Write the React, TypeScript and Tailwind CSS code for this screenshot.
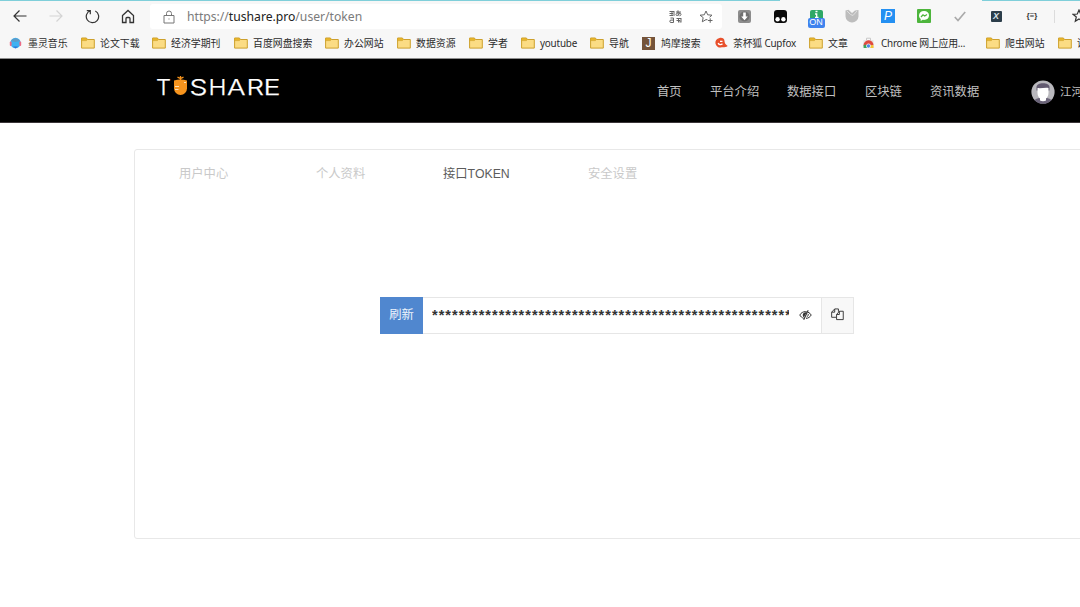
import React from "react";

const cjk = "font-['Liberation_Sans','Noto_Sans_CJK_SC',sans-serif]";

function Folder() {
  return (
    <svg width="14" height="12" viewBox="0 0 14 12">
      <path d="M.6 1.2h4.8l1.2 1.3h6.7v8.6H.6z" fill="#fbdc84" stroke="#cda02c" strokeWidth="1" />
      <path d="M.6 1h4.8l1 1.4-1 1.2H.6z" fill="#e9b62b" stroke="#cda02c" strokeWidth=".6" />
    </svg>
  );
}

function Headphones() {
  return (
    <svg width="13" height="12" viewBox="0 0 13 12">
      <circle cx="6.5" cy="6" r="5.2" fill="#3fb2f2" />
      <path d="M2 4a5 5 0 0 1 9 0L6.500 5z" fill="#5d9cc8" />
      <rect x=".8" y="4.500" width="1.800" height="4.500" rx=".9" fill="#ed6b86" />
      <rect x="10.400" y="4.500" width="1.800" height="4.500" rx=".9" fill="#ed6b86" />
      <path d="M4 9.500h5l-2.500 2z" fill="#2f72d8" />
    </svg>
  );
}

function Fox() {
  return (
    <svg width="14" height="12" viewBox="0 0 14 12">
      <path d="M5.500 1C8 .3 10.300 1.500 10.500 4c.2 2 .8 3.500 3.200 5-2 1.600-4.500 1.300-6 1.300A4.800 4.800 0 1 1 5.500 1z" fill="#e8502c" />
      <path d="M4.200 6c.5 1.800 2.800 2.200 4.300.8M6 4.300h2.500" stroke="#fff" strokeWidth="1.300" fill="none" />
    </svg>
  );
}

function WebStore() {
  return (
    <svg width="13" height="12" viewBox="0 0 13 12">
      <path d="M1.500 3h10l.7 8H.8z" fill="#e6e6e6" />
      <path d="M4.500 3V1.200h4V3" stroke="#c9c9c9" fill="none" />
      <path d="M1.500 8.500A5 5 0 0 1 11.500 8L8.500 9H4z" fill="#e04a3f" />
      <path d="M1.500 8.200 1.700 11H6L4 7.500z" fill="#3ba55c" />
      <path d="M11.500 8.200V11H6.500L8.500 8z" fill="#f6c433" />
      <circle cx="6.500" cy="9" r="2.100" fill="#4a86e8" stroke="#fff" strokeWidth=".7" />
    </svg>
  );
}

function JBadge() {
  return (
    <span className="flex h-[13px] w-[13px] items-center justify-center bg-[#75543a] font-['Liberation_Sans',sans-serif] text-[12px] leading-none text-white">J</span>
  );
}

const bookmarks: { label: string; width: string; icon: React.ReactNode; tight?: boolean }[] = [
  { label: "墨灵音乐", width: "w-[72px]", icon: <Headphones /> },
  { label: "论文下载", width: "w-[71px]", icon: <Folder /> },
  { label: "经济学期刊", width: "w-[82px]", icon: <Folder /> },
  { label: "百度网盘搜索", width: "w-[91px]", icon: <Folder /> },
  { label: "办公网站", width: "w-[72px]", icon: <Folder /> },
  { label: "数据资源", width: "w-[72px]", icon: <Folder /> },
  { label: "学者", width: "w-[52px]", icon: <Folder /> },
  { label: "youtube", width: "w-[69px]", icon: <Folder />, tight: true },
  { label: "导航", width: "w-[52px]", icon: <Folder /> },
  { label: "鸠摩搜索", width: "w-[72px]", icon: <JBadge /> },
  { label: "茶杯狐 Cupfox", width: "w-[95px]", icon: <Fox />, tight: true },
  { label: "文章", width: "w-[53px]", icon: <Folder /> },
  { label: "Chrome 网上应用...", width: "w-[124px]", icon: <WebStore />, tight: true },
  { label: "爬虫网站", width: "w-[72px]", icon: <Folder /> },
  { label: "讲座", width: "w-[72px]", icon: <Folder /> },
];

function Cell({ children }: { children: React.ReactNode }) {
  return <div className="flex h-full w-9 shrink-0 items-center justify-center">{children}</div>;
}

function Toolbar() {
  return (
    <div className="flex h-[30px] shrink-0 items-center pl-[2px]">
      <Cell>
        <svg width="14" height="12" viewBox="0 0 14 12" fill="none" stroke="#333" strokeWidth="1.200"><path d="M13.500 6H1M6.500.5 1 6l5.500 5.500" /></svg>
      </Cell>
      <Cell>
        <svg width="14" height="12" viewBox="0 0 14 12" fill="none" stroke="#d4d4d4" strokeWidth="1.200"><path d="M.5 6H13M7.500.5 13 6l-5.500 5.500" /></svg>
      </Cell>
      <Cell>
        <svg width="15" height="15" viewBox="0 0 15 15" fill="none" stroke="#333" strokeWidth="1.200"><path d="M5.300 1.700a6.200 6.200 0 1 0 5 .3M1.800 1.700h3.500v3.500" /></svg>
      </Cell>
      <Cell>
        <svg width="14" height="15" viewBox="0 0 14 15" fill="none" stroke="#333" strokeWidth="1.300"><path d="M1.500 6.500 7 1.500l5.500 5V13.500H9V9.500a1 1 0 0 0-1-1H6a1 1 0 0 0-1 1v4H1.500z" /></svg>
      </Cell>
      <div className="ml-1 mr-1 mt-[1px] flex h-[25px] w-[572px] shrink-0 items-center rounded-[3px] bg-white pl-[13px]">
        <svg width="12" height="14" viewBox="0 0 12 14" fill="none" stroke="#777" strokeWidth="1"><path d="M1 5.500h10v7.500H1zM3.500 5.500V3.500a2.500 2.500 0 0 1 5 0v2" /><path d="M5.500 9h1" /></svg>
        <div className="ml-[12px] w-[479px] whitespace-nowrap font-['Noto_Sans',sans-serif] text-[12.200px] leading-[16px] tracking-[-0.020px] text-[#7b7b7b]">
          https://<span className="text-[#222]">tushare.pro</span>/user/token
        </div>
        <svg className="ml-[3px] shrink-0" width="13" height="13" viewBox="0 0 13 13" fill="none" stroke="#666" strokeWidth="1">
          <path d="M.5 1.500h5M.5 3.500h3.500M3 1v4.500M5 2v4M.5 5.500h3.500M1.500 8h3v4.500h-2.500a1.200 1.200 0 0 1 0-2.400h2.500M7 2h5M9 .3c-.2 2 0 3 .5 5M11 3c-1 2.500-4 3.500-4 1.500s5-2.500 5 0c0 .8-.6 1.200-1.500 1.300M7.500 8.500h4.500M7.500 10.500h3.500v2M9.500 8v4.500M12 8v4.500" />
        </svg>
        <svg className="ml-[17px] shrink-0" width="14" height="14" viewBox="0 0 14 14" fill="none" stroke="#666" strokeWidth="1">
          <path d="M8.500 9.800 7 9.600l-3.700 2.200.9-4.200L1 5.200l4.300-.4L7 1l1.700 3.800 4.300.4-2.400 2M9 10.500h4.500M11.200 8.300v4.500" />
        </svg>
      </div>
      <Cell>
        <svg width="13" height="13" viewBox="0 0 13 13"><rect width="13" height="13" rx="2" fill="#8d8d8d" /><circle cx="6.500" cy="6.500" r="5" fill="#707070" /><path d="M5.200 2.500h2.600v4h2L6.500 10.300 3.200 6.500h2z" fill="#fff" /></svg>
      </Cell>
      <Cell>
        <svg width="13" height="13" viewBox="0 0 13 13"><rect width="13" height="13" rx="3" fill="#0b0b0b" /><circle cx="3.600" cy="9.200" r="2.200" fill="#fff" /><circle cx="9.400" cy="9.200" r="2.200" fill="#fff" /></svg>
      </Cell>
      <Cell>
        <div className="mt-[5px] flex flex-col items-center">
          <svg width="13" height="8" viewBox="0 0 13 8"><path d="M0 2a2 2 0 0 1 2-2h9a2 2 0 0 1 2 2v6H0z" fill="#2ea866" /><path d="M5.500 1.500h2M5 4h1.700v3.500M5 7.500h3.500" stroke="#fff" strokeWidth="1.300" fill="none" /></svg>
          <span className="flex h-[10px] w-[17px] items-center justify-center rounded-[2px] bg-[#3f83ee] font-['Liberation_Sans',sans-serif] text-[9px] leading-none text-white">ON</span>
        </div>
      </Cell>
      <Cell>
        <svg width="14" height="14" viewBox="0 0 14 14"><path d="M.5 1.500 3.500.8 7 4l3-2.500 3.500-.5v6.500A6.400 6.400 0 0 1 7 13.500 6.400 6.400 0 0 1 .5 7.500z" fill="#bdbdbd" /><path d="m2 2 3.500 3.500L8 6.500 12 2" stroke="#dedede" fill="none" /></svg>
      </Cell>
      <Cell>
        <span className="flex h-[14px] w-[14px] items-center justify-center bg-[#2490f2] font-['Liberation_Sans',sans-serif] text-[12px] italic leading-none text-white">P</span>
      </Cell>
      <Cell>
        <svg width="14" height="14" viewBox="0 0 14 14"><rect width="14" height="14" rx="1" fill="#4db53c" /><path d="M7 2C4 2 2 4 2 6.500c0 1.500.7 2.700 1.700 3.500v2l2-1.200c3.800.6 6.300-1.500 6.300-4.300S10 2 7 2z" fill="#fff" /><path d="m4 8 2-2.200L7.700 7 10 5.500" stroke="#4db53c" strokeWidth="1.300" fill="none" /></svg>
      </Cell>
      <Cell>
        <svg width="12" height="11" viewBox="0 0 12 11"><path d="m.8 6 3.200 3.500L11.200 1" stroke="#aaa" strokeWidth="1.700" fill="none" /></svg>
      </Cell>
      <Cell>
        <span className="flex h-[11px] w-[11px] items-center justify-center rounded-[1px] bg-[#2c3e4a] font-['Liberation_Sans',sans-serif] text-[9px] font-bold italic leading-none text-[#d9e3e8]">X</span>
      </Cell>
      <Cell>
        <span className="font-['Liberation_Sans',sans-serif] text-[8px] font-bold leading-none text-[#333]">{"{≡}"}</span>
      </Cell>
      <div className="ml-1 h-[13px] w-px shrink-0 bg-[#dcdcdc]" />
      <svg className="ml-[17px] shrink-0" width="14" height="14" viewBox="0 0 14 14" fill="none" stroke="#333" strokeWidth="1.200"><path d="m7 1 1.700 4 4.300.3L9.700 8l1 4.300L7 10l-3.700 2.300 1-4.300L1 5.300 5.300 5z" /></svg>
    </div>
  );
}

function Logo() {
  return (
    <svg width="130" height="32" viewBox="0 -4 130 32" role="img" aria-label="TUSHARE">
      <g fill="#fff" stroke="#fff" strokeWidth=".25" fontFamily="Inter, sans-serif" fontWeight="300" fontSize="22">
        <text x="0" y="20" textLength="15" lengthAdjust="spacingAndGlyphs">T</text>
        <text x="33.500" y="20" textLength="18" lengthAdjust="spacingAndGlyphs">S</text>
        <text x="52.500" y="20" textLength="18" lengthAdjust="spacingAndGlyphs">H</text>
        <text x="71" y="20" textLength="18.500" lengthAdjust="spacingAndGlyphs">A</text>
        <text x="90.500" y="20" textLength="17.500" lengthAdjust="spacingAndGlyphs">R</text>
        <text x="107.500" y="20" textLength="17" lengthAdjust="spacingAndGlyphs">E</text>
      </g>
      <path d="M18 5.500Q24.500 3.500 31 5.500v8a6.500 6.500 0 0 1-13 0z" fill="#f7941d" />
      <path d="M24.500 5V2M21.500 2.200 24.500 3.500l3-1.300M24.500 1v2" stroke="#f7941d" strokeWidth="1.300" fill="none" />
      <path d="M19 11.500h4M19 14.500h3.500M28 7.500h2" stroke="#ffe0b5" strokeWidth="1.200" />
    </svg>
  );
}

function SiteHeader() {
  return (
    <header className="flex h-[64px] shrink-0 items-center border-b border-[#3a3538] bg-black text-[12.300px] leading-none text-[#c0c0c0]">
      <div className="mb-[7px] ml-[156px] w-[501px] shrink-0"><Logo /></div>
      <nav className="mt-[2px] flex shrink-0 items-center whitespace-nowrap">
        <a className="w-[53px] pt-[2px]">首页</a>
        <a className="w-[77px] pt-[2px]">平台介绍</a>
        <a className="w-[78px] pt-[2px]">数据接口</a>
        <a className="w-[65px] pt-[2px]">区块链</a>
        <a className="w-[101px] pt-[2px]">资讯数据</a>
        <svg className="shrink-0" width="24" height="24" viewBox="0 0 24 24">
          <circle cx="12" cy="12" r="11.600" fill="#b9b8bd" />
          <path d="M3.500 20.200C6 17.500 9 18 12 18s6-.5 8.500 2.200a11.800 11.800 0 0 1-17 0z" fill="#6a6378" />
          <path d="M5.500 10.500V7c0-2.500 3-3.800 6.500-3.800S18.500 4.500 18.500 7v3.500z" fill="#625a70" />
          <path d="M6.500 8c3 .5 8-.5 11 0V13c0 3-1.500 4.500-2.500 5.500v2c-1.500 1-4.500 1-6 0v-2C8 17.500 6.500 16 6.500 13z" fill="#fff" />
        </svg>
        <span className="ml-[5px] pt-[2px] text-[11.500px]">江河</span>
      </nav>
    </header>
  );
}

function EyeSlash() {
  return (
    <svg className="mb-[2px] ml-[10px] shrink-0" width="13" height="12" viewBox="0 0 13 12" fill="none" stroke="#333" strokeWidth="1">
      <path d="M4.800 9.300C3 8.800 1.500 7.500.8 6 2 3.800 4.200 2.600 6.500 2.600l1.200.1M9 3.200c1.500.6 2.600 1.600 3.200 2.800-1 2-3 3.300-5.200 3.400" />
      <path d="M4.800 8.300C3 6.500 3.500 3.500 6.700 3.200L8 3z" fill="#333" stroke="none" />
      <path d="M9.200 1.200 4.700 10.800" strokeWidth="1.100" />
      <path d="M9.200 5c.2 1.200-.3 2.300-1.500 3" />
    </svg>
  );
}

function TokenField() {
  return (
    <div className="ml-[245px] mt-[111px] flex h-[37px] w-[474px]">
      <button className="w-[43px] shrink-0 bg-[#5087cf] text-[12.300px] leading-none text-[#eef4fc]">刷新</button>
      <div className="flex w-[398px] shrink-0 items-center border-y border-[#e6e6e6] pl-[9px]">
        <div className="mb-[3px] h-[14px] w-[357px] overflow-hidden whitespace-nowrap font-['Liberation_Sans',sans-serif] text-[14.500px] font-bold leading-[17px] tracking-[1.020px] text-[#333]">
          {"*".repeat(64)}
        </div>
        <EyeSlash />
      </div>
      <button className="flex w-[33px] shrink-0 items-center justify-center border border-[#e6e6e6] bg-[#f8f8f8] pb-[2px]">
        <svg width="13" height="13" viewBox="0 0 14 14" fill="none" stroke="#333" strokeWidth="1"><path d="M5.500 10H.7V4.500L4 1h4v3M4 1v3.500H.7M6 12.500h7.200V3.500H9L6 7zM9 3.500V7H6" /></svg>
      </button>
    </div>
  );
}

export default function App() {
  return (
    <div className={`flex h-[607px] w-[1080px] flex-col overflow-hidden bg-white ${cjk}`}>
      <div className="flex h-[59px] shrink-0 flex-col overflow-hidden border-b border-[#8d8d8d] bg-[#f7f7f7]">
        <div className="flex h-px shrink-0 justify-between">
          <div className="w-[780px] bg-[#7fcfda]" />
          <div className="w-[98px] bg-[#7fcfda]" />
        </div>
        <Toolbar />
        <div className="flex h-6 shrink-0 items-center pl-[9px]">
          {bookmarks.map((b) => (
            <div key={b.label} className={`flex shrink-0 items-center ${b.width}`}>
              <span className="flex w-[19px] shrink-0 items-center">{b.icon}</span>
              <span className={`whitespace-nowrap font-['Noto_Sans','Noto_Sans_CJK_SC',sans-serif] text-[9.900px] leading-[14px] text-[#2b2b2b] ${b.tight ? "tracking-[-0.200px]" : ""}`}>{b.label}</span>
            </div>
          ))}
        </div>
      </div>
      <SiteHeader />
      <main className="ml-[134px] mt-[26px] h-[390px] w-[960px] shrink-0 rounded-[3px] border border-[#e8e8e8]">
        <div className="flex h-[36px] items-end pl-[44px]">
          <div className="flex h-[24px] items-center whitespace-nowrap text-[12.300px] leading-none text-[#c9c9c9]">
            <a className="w-[137px]">用户中心</a>
            <a className="w-[127px]">个人资料</a>
            <a className="w-[145px] text-[#5c5c5c]">接口TOKEN</a>
            <a>安全设置</a>
          </div>
        </div>
        <TokenField />
      </main>
    </div>
  );
}
